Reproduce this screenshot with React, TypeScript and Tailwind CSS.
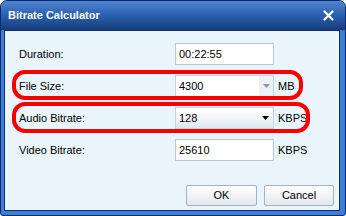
import type { ReactNode } from 'react'

// Bitrate Calculator dialog (XP-style window, annotated rows)

const font = { fontFamily: '"Liberation Sans", Arial, sans-serif' }

function Field({ children }: { children: ReactNode }): JSX.Element {
  return (
    <div className="flex h-[22px] w-[99px] items-center border border-[#b7c8d8] bg-white pl-[3px] text-[11px] text-black">
      {children}
    </div>
  )
}

function Row({
  label,
  unit,
  ring,
  children,
}: {
  label: string
  unit?: string
  ring?: string
  children: ReactNode
}): JSX.Element {
  return (
    <div className="relative flex h-[22px] items-center">
      <div className="w-[156px] text-[11px] text-black">{label}</div>
      {children}
      {unit && <div className="ml-[4px] text-[11px] text-black">{unit}</div>}
      {ring && (
        <div className={`pointer-events-none absolute rounded-[13px] border-[4px] border-[#f80000] ${ring}`} />
      )}
    </div>
  )
}

export default function App(): JSX.Element {
  return (
    <div className="h-[216px] w-[346px] bg-white" style={font}>
      <div className="flex h-full flex-col overflow-hidden rounded-t-[7px] rounded-b-[3px] border border-[#0b2a6b] bg-[#3a7fd4]">
        {/* title bar */}
        <div className="flex h-[29px] shrink-0 items-center justify-between bg-gradient-to-b from-[#4f85d2] via-[#2a5fb0] to-[#163d7a] pl-[7px] pr-[11px]">
          <span className="text-[11px] font-bold text-white">Bitrate Calculator</span>
          <svg width="11" height="11" viewBox="0 0 11 11">
            <path d="M1.5 1.5 L9.5 9.5 M9.5 1.5 L1.5 9.5" stroke="#ffffff" strokeWidth="2.2" strokeLinecap="round" />
          </svg>
        </div>

        {/* body */}
        <div className="mb-[4px] ml-[3px] mr-[5px] flex flex-1 flex-col border border-[#12307a] bg-[#eaf5fb] pl-[14px] pr-[5px] pt-[12px]">
          <div className="flex flex-col gap-[10px]">
            <Row label="Duration:">
              <Field>00:22:55</Field>
            </Row>

            <Row label="File Size:" unit="MB" ring="-top-[5px] -bottom-[3px] -left-[7px] w-[291px]">
              <div className="flex h-[22px] w-[99px] border border-[#c3d2e0] bg-white text-[11px] text-black">
                <div className="flex flex-1 items-center pl-[3px]">4300</div>
                <div className="flex w-[14px] items-center justify-center bg-[#edf0f4]">
                  <svg width="7" height="4" viewBox="0 0 7 4">
                    <path d="M0 0 H7 L3.5 4 Z" fill="#8c9ab0" />
                  </svg>
                </div>
              </div>
            </Row>

            <Row label="Audio Bitrate:" unit="KBPS" ring="-top-[5px] -bottom-[4px] -left-[7px] w-[298px]">
              <div className="flex h-[22px] w-[99px] items-center border border-[#c3d2e0] bg-gradient-to-b from-white via-[#f2f5f9] to-[#dfe6ef] pl-[3px] pr-[4px] text-[11px] text-black">
                <div className="flex-1">128</div>
                <svg width="7" height="4" viewBox="0 0 7 4">
                  <path d="M0 0 H7 L3.5 4 Z" fill="#000000" />
                </svg>
              </div>
            </Row>

            <Row label="Video Bitrate:" unit="KBPS">
              <Field>25610</Field>
            </Row>
          </div>

          <div className="mt-[24px] flex justify-end gap-[7px]">
            <button className="h-[21px] w-[71px] rounded-[2px] border border-[#a4b2c4] bg-gradient-to-b from-white to-[#e3e8ef] text-[11px] text-black">
              OK
            </button>
            <button className="h-[21px] w-[70px] rounded-[2px] border border-[#a4b2c4] bg-gradient-to-b from-white to-[#e3e8ef] text-[11px] text-black">
              Cancel
            </button>
          </div>
        </div>
      </div>
    </div>
  )
}
